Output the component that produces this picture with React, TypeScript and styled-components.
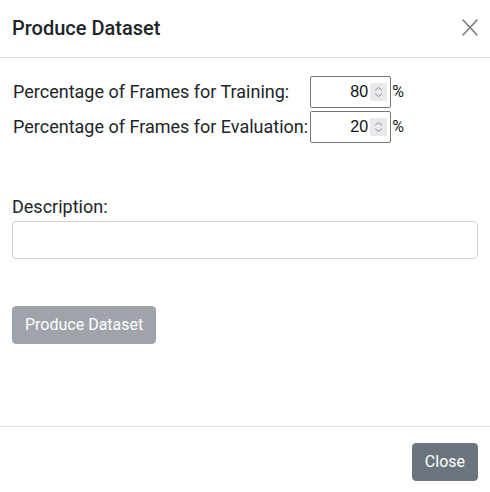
import { createGlobalStyle, styled } from 'styled-components';

const GlobalStyle = createGlobalStyle`
  html, body {
    margin: 0;
    padding: 0;
    background: #ffffff;
  }
  body {
    font-family: Roboto, "Liberation Sans", sans-serif;
    font-size: 16px;
    line-height: 1.5;
    color: #212529;
  }
  * {
    box-sizing: border-box;
  }
`;

const splitRows = [
  { label: 'Percentage of Frames for Training:', value: 80 },
  { label: 'Percentage of Frames for Evaluation:', value: 20 },
];

const SpinIcon = () => (
  <svg width="17" height="18" viewBox="0 0 17 18">
    <rect width="17" height="18" fill="#e9e9ed" />
    <path
      d="M5.5 7 L8.5 4.5 L11.5 7"
      fill="none"
      stroke="#8a8a8f"
      strokeWidth="1"
      strokeLinecap="round"
      strokeLinejoin="round"
    />
    <path
      d="M5.5 11 L8.5 13.5 L11.5 11"
      fill="none"
      stroke="#8a8a8f"
      strokeWidth="1"
      strokeLinecap="round"
      strokeLinejoin="round"
    />
  </svg>
);

const CloseIcon = () => (
  <svg width="16" height="17" viewBox="0 0 16 17">
    <path
      d="M1 1 L15 16 M15 1 L1 16"
      stroke="#7a7a7a"
      strokeWidth="1.6"
      strokeLinecap="round"
    />
  </svg>
);

const App = () => {
  return (
    <>
      <GlobalStyle />
      <Modal>
        <Header>
          <Title>Produce Dataset</Title>
          <CloseButton aria-label="Close">
            <CloseIcon />
          </CloseButton>
        </Header>
        <Body>
          <SplitGrid>
            {splitRows.map((row) => (
              <SplitRow key={row.label}>
                <SplitLabel>{row.label}</SplitLabel>
                <NumberBox>
                  <NumberInput type="text" value={row.value} readOnly />
                  <SpinIcon />
                </NumberBox>
                <Percent>%</Percent>
              </SplitRow>
            ))}
          </SplitGrid>
          <DescriptionLabel>Description:</DescriptionLabel>
          <TextInput type="text" />
          <Button disabled>Produce Dataset</Button>
        </Body>
        <Footer>
          <Button>Close</Button>
        </Footer>
      </Modal>
    </>
  );
};

export default App;

const Modal = styled.div`
  display: flex;
  flex-direction: column;
  width: 490px;
  height: 492px;
  background: #ffffff;
`;

const Header = styled.div`
  display: flex;
  flex-direction: row;
  align-items: center;
  justify-content: space-between;
  height: 58px;
  padding: 0 12px 2px 12px;
  border-bottom: 1px solid #dee2e6;
`;

const Title = styled.h5`
  margin: 0;
  font-size: 20px;
  font-weight: 500;
  line-height: 24px;
`;

const CloseButton = styled.button`
  display: flex;
  align-items: center;
  justify-content: center;
  padding: 0;
  margin: 0;
  border: 0;
  background: transparent;
`;

const Body = styled.div`
  flex: 1;
  display: flex;
  flex-direction: column;
  align-items: flex-start;
  padding: 18px 12px 0 12px;
  font-size: 18px;
`;

const SplitGrid = styled.div`
  display: grid;
  grid-template-columns: auto auto auto;
  row-gap: 3px;
  align-items: center;
  margin-left: 1px;
`;

const SplitRow = styled.div`
  display: contents;
`;

const SplitLabel = styled.span`
  padding-right: 2px;
  white-space: nowrap;
  line-height: 24px;
`;

const NumberBox = styled.div`
  display: flex;
  flex-direction: row;
  align-items: center;
  width: 81px;
  height: 32px;
  padding: 0 3px 0 2px;
  border: 1px solid #767676;
  border-radius: 2px;
`;

const NumberInput = styled.input`
  flex: 1;
  min-width: 0;
  border: 0;
  padding: 0 2px 0 0;
  outline: none;
  font-family: "Liberation Sans", Arial, sans-serif;
  font-size: 16px;
  text-align: right;
  color: #111111;
  background: transparent;
`;

const Percent = styled.span`
  padding-left: 1px;
  font-size: 16px;
`;

const DescriptionLabel = styled.label`
  display: block;
  margin-top: 52px;
  margin-bottom: 2px;
  line-height: 24px;
`;

const TextInput = styled.input`
  width: 100%;
  height: 38px;
  padding: 6px 12px;
  border: 1px solid #ced4da;
  border-radius: 4px;
  font-family: Roboto, sans-serif;
  font-size: 16px;
  outline: none;
`;

const Button = styled.button`
  height: 38px;
  padding: 0 12px;
  border: 1px solid #6c757d;
  border-radius: 4px;
  background: #6c757d;
  color: #ffffff;
  font-family: Roboto, sans-serif;
  font-size: 16px;
  line-height: 24px;

  &:disabled {
    opacity: 0.65;
  }

  ${Body} & {
    margin-top: 47px;
  }
`;

const Footer = styled.div`
  display: flex;
  flex-direction: row;
  justify-content: flex-end;
  padding: 16px 12px 11px 12px;
  border-top: 1px solid #dee2e6;
`;
